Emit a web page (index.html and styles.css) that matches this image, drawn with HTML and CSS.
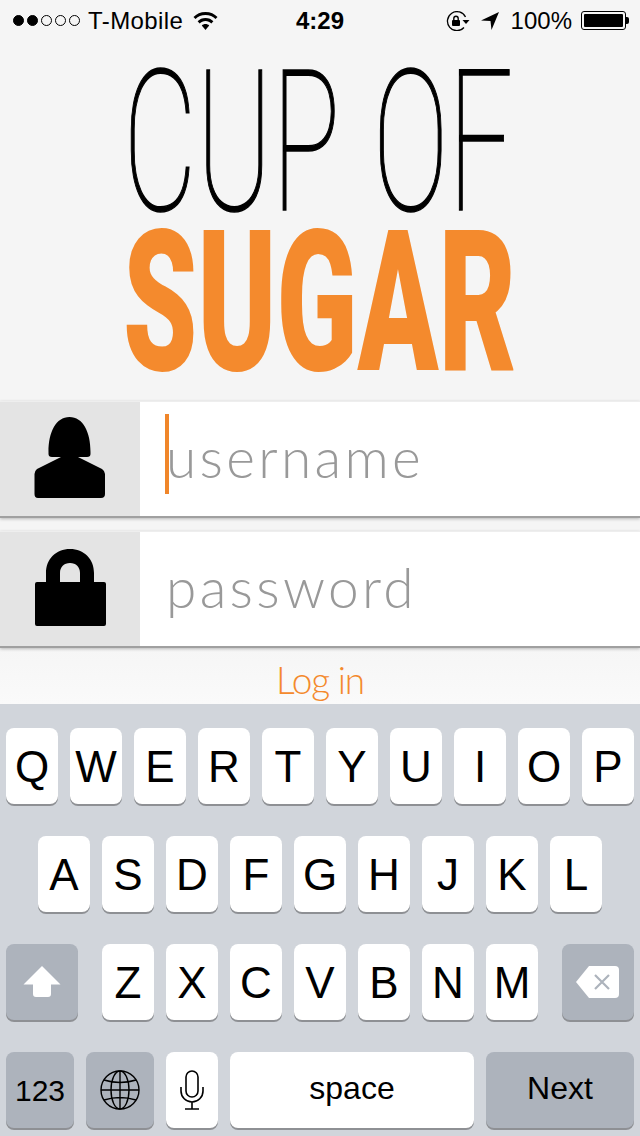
FILE: index.html
```html
<!DOCTYPE html>
<html lang="en">
<head>
  <meta charset="UTF-8" />
  <title>Cup of Sugar</title>
  <link rel="stylesheet" href="styles.css">
</head>
<body>
  <div class="status-bar">
    <div class="status-left">
      <div class="signal">
        <span class="dot full"></span><span class="dot full"></span><span class="dot"></span><span class="dot"></span><span class="dot"></span>
      </div>
      <span class="carrier">T-Mobile</span>
      <svg class="wifi" width="25" height="18" viewBox="0 0 25 18">
        <path d="M12.5 0C7.6 0 3.5 1.900 .5 5L2.500 7.100C5 4.500 8.500 3 12.500 3S20 4.500 22.500 7.100L24.500 5C21.500 1.900 17.400 0 12.500 0Z"/>
        <path d="M12.500 6C9.300 6 6.600 7.200 4.600 9.300L6.700 11.400C8.200 9.900 10.200 9 12.500 9S16.800 9.900 18.300 11.400L20.400 9.300C18.400 7.200 15.700 6 12.500 6Z"/>
        <path d="M12.500 12C11 12 9.800 12.500 8.800 13.500L12.500 18L16.200 13.500C15.200 12.500 14 12 12.500 12Z"/>
      </svg>
    </div>
    <div class="clock">4:29</div>
    <div class="status-right">
      <svg class="rotation" width="24" height="20" viewBox="0 0 24 20">
        <path d="M19.500 6A9.500 9.500 0 1 0 18 16.500" fill="none" stroke="#000" stroke-width="1.300"/>
        <path d="M16.500 9H23.500L20 13Z"/>
        <rect x="6" y="9" width="8" height="6" rx="1"/>
        <path d="M7.800 9V7.500A2.200 2.200 0 0 1 12.200 7.500V9" fill="none" stroke="#000" stroke-width="1.400"/>
      </svg>
      <svg class="arrow" width="18" height="18" viewBox="0 0 18 18">
        <path d="M0 8.500L18 0L10.500 18L9.500 9Z"/>
      </svg>
      <span class="percent">100%</span>
      <div class="battery"><div class="battery-fill"></div></div>
      <div class="battery-nub"></div>
    </div>
  </div>

  <div class="logo">
    <div class="logo-line cup">CUP OF</div>
    <div class="logo-line sugar">SUGAR</div>
  </div>

  <div class="field first">
    <div class="field-icon">
      <svg width="140" height="114" viewBox="0 0 140 114">
        <path d="M48.500 50C48.500 30 56 15 69.500 15C83 15 90.500 30 90.500 50V52Q90.500 55 87 55H78L102 67Q105 69 105 72V92Q105 96 101 96H38Q34.500 96 34.500 92V72Q34.500 69 37 67L61 55H52Q48.500 55 48.500 52Z"/>
      </svg>
    </div>
    <input class="field-input" type="text" placeholder="username" />
    <span class="caret"></span>
  </div>
  <div class="field">
    <div class="field-icon">
      <svg width="140" height="114" viewBox="0 0 140 114">
        <path fill-rule="evenodd" d="M46 50V41C46 27 56 17 70 17S94 27 94 41V50H104Q106 50 106 52V92Q106 94 104 94H37Q35 94 35 92V52Q35 50 37 50ZM60 50H80V41C80 35 76 31 70 31S60 35 60 41Z"/>
      </svg>
    </div>
    <input class="field-input" type="password" placeholder="password" />
  </div>

  <div class="login-row">
    <a class="login-link">Log in</a>
  </div>

  <div class="keyboard">
    <div class="key-row">
      <div class="key">Q</div><div class="key">W</div><div class="key">E</div><div class="key">R</div><div class="key">T</div>
      <div class="key">Y</div><div class="key">U</div><div class="key">I</div><div class="key">O</div><div class="key">P</div>
    </div>
    <div class="key-row">
      <div class="key">A</div><div class="key">S</div><div class="key">D</div><div class="key">F</div><div class="key">G</div>
      <div class="key">H</div><div class="key">J</div><div class="key">K</div><div class="key">L</div>
    </div>
    <div class="key-row spread">
      <div class="key dark wide">
        <svg width="38" height="32" viewBox="0 0 38 32">
          <path d="M19 0L37.500 18.500H28V28Q28 31 25 31H13Q10 31 10 28V18.500H.5Z" fill="#fff"/>
        </svg>
      </div>
      <div class="letters">
        <div class="key">Z</div><div class="key">X</div><div class="key">C</div><div class="key">V</div><div class="key">B</div><div class="key">N</div><div class="key">M</div>
      </div>
      <div class="key dark wide">
        <svg width="46" height="32" viewBox="0 0 46 32">
          <path d="M14 0H40Q44 0 44 4V28Q44 32 40 32H14L1 16Z" fill="#fff"/>
          <path d="M20 9L34 23M34 9L20 23" stroke="#adb3bc" stroke-width="2.200" fill="none"/>
        </svg>
      </div>
    </div>
    <div class="key-row">
      <div class="key dark num">123</div>
      <div class="key dark num">
        <svg width="40" height="40" viewBox="0 0 40 40" fill="none" stroke="#000" stroke-width="1.400">
          <circle cx="20" cy="20" r="19"/>
          <ellipse cx="20" cy="20" rx="9" ry="19"/>
          <path d="M20 1V39M1 20H39M4 10Q20 15 36 10M4 30Q20 25 36 30"/>
        </svg>
      </div>
      <div class="key">
        <svg width="24" height="40" viewBox="0 0 24 40" fill="none" stroke="#000" stroke-width="1.600">
          <rect x="6" y="1" width="12" height="26" rx="6"/>
          <path d="M1 17V21A11 11 0 0 0 23 21V17M12 32V39M5 39H19"/>
        </svg>
      </div>
      <div class="key label">space</div>
      <div class="key dark label next">Next</div>
    </div>
  </div>
</body>
</html>
```

FILE: styles.css
```css
* {
  box-sizing: border-box;
}

body {
  margin: 0;
  width: 640px;
  height: 1136px;
  overflow: hidden;
  background-color: #f5f5f5;
  font-family: "Liberation Sans", Arial, sans-serif;
  color: #000;
}

/* status bar */
.status-bar {
  height: 40px;
  display: grid;
  grid-template-columns: 1fr auto 1fr;
  align-items: center;
  padding: 1px 11px 0 13px;
  font-size: 24px;
}

.status-left,
.status-right {
  display: flex;
  align-items: center;
}

.status-right {
  justify-content: flex-end;
}

.signal {
  display: flex;
  gap: 3px;
}

.dot {
  width: 11px;
  height: 11px;
  border: 1px solid #000;
  border-radius: 50%;
}

.dot.full {
  background-color: #000;
}

.carrier {
  margin-left: 8px;
  letter-spacing: 0.4px;
}

.wifi {
  margin-left: 10px;
}

.clock {
  font-weight: bold;
  margin-left: -2px;
}

.arrow {
  margin-left: 11px;
}

.percent {
  margin-left: 12px;
}

.battery {
  width: 45px;
  height: 19px;
  margin-left: 9px;
  padding: 2px;
  border: 1px solid #000;
  border-radius: 3px;
}

.battery-fill {
  height: 100%;
  background-color: #000;
  border-radius: 1px;
}

.battery-nub {
  width: 3px;
  height: 7px;
  background-color: #000;
  border-radius: 0 2px 2px 0;
}

/* logo */
.logo {
  height: 361px;
  padding-top: 31px;
  display: flex;
  flex-direction: column;
  align-items: center;
  gap: 17px;
  font-family: Roboto, sans-serif;
  font-size: 197px;
}

.logo-line {
  line-height: 143px;
  height: 143px;
  white-space: nowrap;
}

.cup {
  margin-left: -4px;
  font-weight: 100;
  word-spacing: 10px;
  -webkit-text-stroke: 1.5px #000;
  transform: scaleX(0.575);
}

.sugar {
  font-weight: 900;
  color: #f48a2d;
  transform: scaleX(0.604);
}

/* form */
.field {
  position: relative;
  height: 117px;
  display: flex;
  background-color: #fff;
  border-top: 1px solid #eeeeee;
  border-bottom: 2px solid #a0a0a0;
  box-shadow: 0 1px 3px rgba(0, 0, 0, 0.25);
}

.field.first {
  margin-bottom: 13px;
}

.field-icon {
  width: 140px;
  background-color: #e4e4e4;
}

.field-icon svg {
  display: block;
}

.field-input {
  flex: 1;
  min-width: 0;
  padding: 0 0 4px 26px;
  border: none;
  outline: none;
  background: transparent;
  font-family: Lato, sans-serif;
  font-weight: 300;
  font-size: 55px;
  letter-spacing: 3.300px;
}

.field-input::placeholder {
  color: #999999;
  opacity: 1;
}

.caret {
  position: absolute;
  left: 165px;
  top: 12px;
  width: 4px;
  height: 80px;
  background-color: #f0862a;
}

.login-row {
  height: 56px;
  padding-top: 6px;
  display: flex;
  align-items: center;
  justify-content: center;
  background: linear-gradient(#f6f6f6, #fafafa);
}

.login-link {
  font-family: Lato, sans-serif;
  font-weight: 300;
  font-size: 37px;
  letter-spacing: -1.200px;
  color: #f48a2d;
}

/* keyboard */
.keyboard {
  height: 432px;
  padding: 24px 6px 0 6px;
  display: flex;
  flex-direction: column;
  gap: 32px;
  background-color: #d1d5db;
}

.key-row {
  display: flex;
  justify-content: center;
  gap: 12px;
}

.key-row.spread {
  justify-content: space-between;
}

.letters {
  display: flex;
  gap: 12px;
}

.key {
  width: 52px;
  height: 76px;
  padding-top: 2px;
  display: flex;
  align-items: center;
  justify-content: center;
  background-color: #fff;
  border-radius: 8px;
  box-shadow: 0 2px 0 #8e9094;
  font-size: 44px;
}

.key svg {
  margin-top: -2px;
}

.key.dark {
  background-color: #adb3bc;
}

.key.wide {
  width: 72px;
}

.key.num {
  width: 68px;
  font-size: 30px;
}

.key.label {
  width: 244px;
  padding: 0 0 3px 0;
  font-size: 32px;
}

.key.next {
  width: 148px;
}
```
